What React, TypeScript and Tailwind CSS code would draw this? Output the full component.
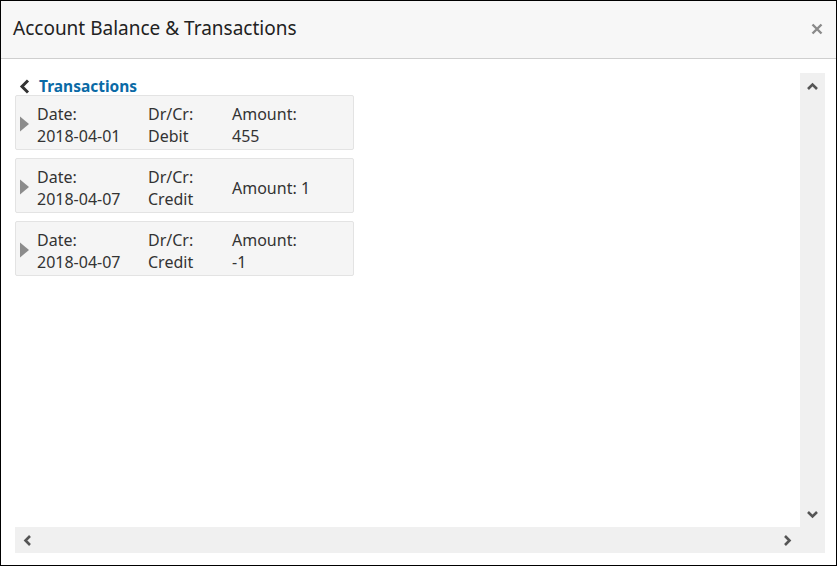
const rows = [
  { date: '2018-04-01', type: 'Debit', amount: '455', wrap: true },
  { date: '2018-04-07', type: 'Credit', amount: '1', wrap: false },
  { date: '2018-04-07', type: 'Credit', amount: '-1', wrap: true },
];

// small scrollbar arrow, dir: up | down | left | right
const Arrow = ({ dir }: { dir: 'up' | 'down' | 'left' | 'right' }) => {
  const d = {
    up: 'M1 7 L5.5 2.5 L10 7',
    down: 'M1 2 L5.5 6.5 L10 2',
    left: 'M7 1 L2.5 5.5 L7 10',
    right: 'M2 1 L6.5 5.5 L2 10',
  }[dir];
  const vert = dir === 'up' || dir === 'down';
  return (
    <svg width={vert ? 11 : 9} height={vert ? 9 : 11} viewBox={vert ? '0 0 11 9' : '0 0 9 11'}>
      <path d={d} fill="none" stroke="#555" strokeWidth="2.6" />
    </svg>
  );
};

const App = () => {
  return (
    <div className="w-[837px] h-[566px] border border-black bg-white flex flex-col font-['Noto_Sans',sans-serif] text-[#333]">
      {/* Header */}
      <div className="h-[58px] shrink-0 bg-[#f7f7f7] border-b border-[#cfcfcf] flex items-center justify-between pl-[12px] pr-[13px]">
        <span className="text-[19px] text-[#222] pb-[3px]">Account Balance &amp; Transactions</span>
        <svg width="12" height="12" viewBox="0 0 12 12" className="mb-[2px]">
          <path d="M1.5 1.5 L10.5 10.5 M10.5 1.5 L1.5 10.5" stroke="#8a8a8a" strokeWidth="2.4" />
        </svg>
      </div>

      {/* Body */}
      <div className="flex-1 pl-[14px] pr-[11px] pt-[14px] pb-[12px] flex flex-col">
        <div className="flex-1 flex">
          <div className="flex-1 pt-[4px]">
            <div className="flex items-center gap-[9px] pl-[4px]">
              <svg width="11" height="15" viewBox="0 0 11 15">
                <path d="M9 1.5 L3 7.5 L9 13.5" fill="none" stroke="#333" strokeWidth="3" />
              </svg>
              <span className="text-[15.5px] font-bold text-[#0a6aa6] leading-[18px]">Transactions</span>
            </div>
            <div className="flex flex-col gap-[8px]">
              {rows.map((r, i) => (
                <div
                  key={i}
                  className="w-[339px] h-[55px] bg-[#f5f5f5] border border-[#e3e3e3] rounded-[2px] flex items-start pt-[7px] text-[16px] leading-[22px]"
                >
                  <svg width="10" height="16" viewBox="0 0 10 16" className="ml-[4px] mr-[7px] mt-[13px]">
                    <path d="M0 0.5 L9 8 L0 15.5 Z" fill="#8c8c8c" />
                  </svg>
                  <div className="w-[111px]">
                    <div>Date:</div>
                    <div>{r.date}</div>
                  </div>
                  <div className="w-[84px]">
                    <div>Dr/Cr:</div>
                    <div>{r.type}</div>
                  </div>
                  <div>
                    {r.wrap ? (
                      <>
                        <div>Amount:</div>
                        <div>{r.amount}</div>
                      </>
                    ) : (
                      <div className="mt-[11px]">Amount: {r.amount}</div>
                    )}
                  </div>
                </div>
              ))}
            </div>
          </div>
          {/* Vertical scrollbar */}
          <div className="w-[25px] bg-[#f0f0f0] flex flex-col items-center justify-between pt-[9px] pb-[8px]">
            <Arrow dir="up" />
            <Arrow dir="down" />
          </div>
        </div>
        {/* Horizontal scrollbar */}
        <div className="h-[26px] bg-[#f0f0f0] flex items-center justify-between pl-[8px] pr-[33px]">
          <Arrow dir="left" />
          <Arrow dir="right" />
        </div>
      </div>
    </div>
  );
};

export default App;
